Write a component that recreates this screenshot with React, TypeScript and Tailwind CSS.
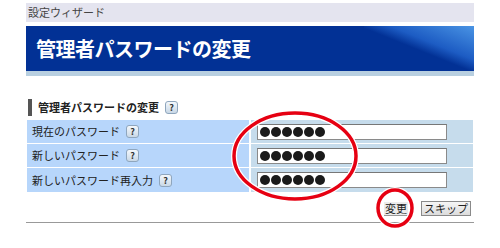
import React from 'react';

const font = { fontFamily: '"Noto Sans CJK JP", "Noto Sans", sans-serif' };

const Help = () => (
    <span className="inline-flex items-center justify-center w-[13px] h-[13px] ml-[6px] rounded-[3px] border border-[#8fa6bd] bg-gradient-to-b from-[#f4f8fc] to-[#c9d8e6] text-[9px] font-bold text-[#333] leading-none">
        ?
    </span>
);

const Dots = () => (
    <div className="flex items-center w-[190px] h-[16px] bg-white border border-[#8a8a8a] border-t-[#777] px-[2px] gap-[1px]">
        {[0, 1, 2, 3, 4, 5].map(i => (
            <span key={i} className="w-[10px] h-[10px] rounded-full bg-[#1a1a1a]" />
        ))}
    </div>
);

const rows = ['現在のパスワード', '新しいパスワード', '新しいパスワード再入力'];

export default function App() {
    return (
        <div className="relative w-[500px] h-[248px] bg-white overflow-hidden" style={font}>
            <div className="ml-[26px] w-[448px] pt-[3px]">
                {/* Wizard bar */}
                <div className="h-[19px] bg-[#e4e4ef] flex items-center px-[2px] text-[11px] text-[#444]">
                    設定ウィザード
                </div>

                {/* Banner */}
                <div className="mt-[4px] relative h-[45px] bg-[#023195] overflow-hidden flex items-center pl-[10px]">
                    <div className="absolute right-0 top-0 w-[110px] h-[45px] bg-[linear-gradient(22deg,transparent_48%,rgba(40,110,215,0.7)_62%,#4a94e4_100%)]" />
                    <span className="relative text-white text-[20px] font-bold tracking-[-0.5px]">管理者パスワードの変更</span>
                </div>
                <div className="h-[5px] bg-[#b8cfe0]" />

                {/* Section heading */}
                <div className="mt-[23px] flex items-center h-[17px] pl-[2px]">
                    <span className="w-[4px] h-[17px] bg-[#555]" />
                    <span className="ml-[6px] text-[11px] font-bold text-[#222]">管理者パスワードの変更</span>
                    <Help />
                </div>

                {/* Table */}
                <div className="mt-[4px] ml-[1px] w-[446px] flex flex-col gap-[1px]">
                    {rows.map((label, i) => (
                        <div key={label} className={`flex gap-[2px] ${i === 2 ? 'h-[24px]' : 'h-[23px]'}`}>
                            <div className="w-[222px] bg-[#b7d6fb] flex items-center pl-[5px] text-[11px] text-[#222]">
                                {label}
                                <Help />
                            </div>
                            <div className="flex-1 bg-[#c6dcec] flex items-center pl-[6px]">
                                <Dots />
                            </div>
                        </div>
                    ))}
                </div>

                {/* Buttons */}
                <div className="mt-[9px] flex justify-end items-center gap-[13px] pr-[3px] h-[15px]">
                    <button className="h-[14px] px-[1px] bg-[#ececec] text-[11px] text-[#222] leading-none border-b border-[#999]">変更</button>
                    <button className="w-[50px] h-[15px] bg-gradient-to-b from-[#f6f6f6] to-[#dcdcdc] border border-[#8a8a8a] text-[11px] text-[#222] leading-none">スキップ</button>
                </div>

                <div className="mt-[6px] h-[1px] bg-[#999]" />
            </div>

            {/* Annotation circles */}
            <svg className="absolute left-0 top-0 pointer-events-none" width="500" height="248">
                <ellipse cx="295" cy="156" rx="61" ry="43" fill="none" stroke="#fff" strokeWidth="6" />
                <ellipse cx="295" cy="156" rx="61" ry="43" fill="none" stroke="#e60012" strokeWidth="3.5" />
                <ellipse cx="395" cy="208" rx="17" ry="18" fill="none" stroke="#fff" strokeWidth="6" />
                <ellipse cx="395" cy="208" rx="17" ry="18" fill="none" stroke="#e60012" strokeWidth="3.5" />
            </svg>
        </div>
    );
}
